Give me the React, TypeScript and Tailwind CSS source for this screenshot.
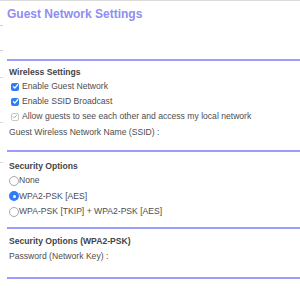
const wireless = [
  { label: "Enable Guest Network", disabled: false },
  { label: "Enable SSID Broadcast", disabled: false },
  { label: "Allow guests to see each other and access my local network", disabled: true },
];

const securityOptions = [
  { label: "None", selected: false },
  { label: "WPA2-PSK [AES]", selected: true },
  { label: "WPA-PSK [TKIP] + WPA2-PSK [AES]", selected: false },
];

function Checkbox({ disabled }: { disabled: boolean }) {
  if (disabled) {
    return (
      <span className="flex h-[8px] w-[8px] shrink-0 items-center justify-center rounded-[2px] border border-[#c8c8c8] bg-white">
        <svg className="h-[7px] w-[7px]" viewBox="0 0 10 10" fill="none" stroke="#9a9a9a" strokeWidth={1.4}>
          <path d="M2 5.2l2 2L8 2.5" strokeLinecap="round" strokeLinejoin="round" />
        </svg>
      </span>
    );
  }
  return (
    <span className="flex h-[8px] w-[8px] shrink-0 items-center justify-center rounded-[2px] bg-[#2f7cf6]">
      <svg className="h-[7px] w-[7px]" viewBox="0 0 10 10" fill="none" stroke="white" strokeWidth={1.8}>
        <path d="M2 5.2l2 2L8 2.5" strokeLinecap="round" strokeLinejoin="round" />
      </svg>
    </span>
  );
}

function Radio({ selected }: { selected: boolean }) {
  if (selected) {
    return (
      <span className="flex h-[10px] w-[10px] shrink-0 items-center justify-center rounded-full bg-[#2f7cf6]">
        <span className="h-[3px] w-[3px] rounded-full bg-white" />
      </span>
    );
  }
  return <span className="h-[10px] w-[10px] shrink-0 rounded-full border border-[#a8a8a8] bg-white" />;
}

export default function App() {
  return (
    <div
      className="relative h-[300px] w-[300px] overflow-hidden bg-white text-[8.6px] text-[#4d4d4d]"
      style={{ fontFamily: '"Liberation Sans", Arial, sans-serif' }}
    >
      {/* frame remnants on the left edge */}
      <div className="absolute left-0 top-[25px] h-px w-[3px] bg-[#d0d0d0]" />
      <div className="absolute left-0 top-[50px] h-px w-[3px] bg-[#d0d0d0]" />
      <div className="absolute left-0 top-[77px] h-px w-[3px] bg-[#d8d8d8]" />
      <div className="absolute left-0 top-[122px] h-px w-[3px] bg-[#d8d8d8]" />
      <div className="absolute left-0 top-[162px] h-px w-[3px] bg-[#d8d8d8]" />

      <div className="h-px w-full bg-[#dcdcdc]" />

      <div className="pl-[7px]">
        <h1 className="flex h-[26px] items-center text-[12px] font-bold text-[#8e8ef2]">Guest Network Settings</h1>

        <div className="mt-[32px] h-[2px] bg-[#9c9cfa]" />

        {/* Wireless */}
        <div className="mt-[5px] flex h-[13px] items-center pl-[2px] font-bold text-[#444]">Wireless Settings</div>
        {wireless.map((w) => (
          <div key={w.label} className="flex h-[15px] items-center gap-[3px] pl-[4px]">
            <Checkbox disabled={w.disabled} />
            <span className="whitespace-nowrap">{w.label}</span>
          </div>
        ))}
        <div className="flex h-[16px] items-center pl-[2px]">Guest Wireless Network Name (SSID) :</div>

        <div className="mt-[10px] h-[2px] bg-[#9c9cfa]" />

        {/* Security */}
        <div className="mt-[7px] flex h-[14px] items-center pl-[2px] font-bold text-[#444]">Security Options</div>
        {securityOptions.map((o) => (
          <div key={o.label} className="flex h-[15.5px] items-center pl-[2px]">
            <Radio selected={o.selected} />
            <span>{o.label}</span>
          </div>
        ))}

        <div className="mt-[7px] h-[2px] bg-[#9c9cfa]" />

        <div className="mt-[6px] flex h-[14px] items-center pl-[2px] font-bold text-[#444]">Security Options (WPA2-PSK)</div>
        <div className="flex h-[16px] items-center pl-[2px]">Password (Network Key) :</div>

        <div className="mt-[12px] h-[2px] bg-[#9c9cfa]" />
      </div>
    </div>
  );
}
